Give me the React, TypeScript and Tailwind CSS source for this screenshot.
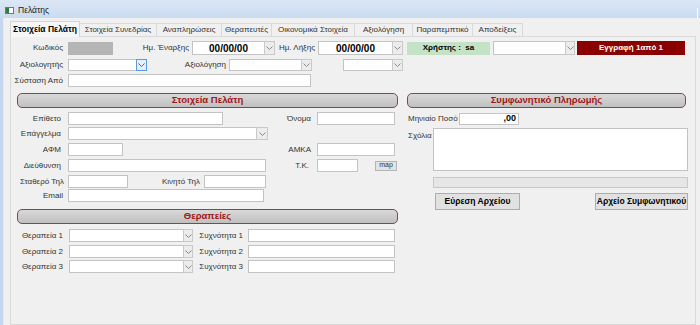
const Chevron = ({ color = '#8a8a8a' }: { color?: string }) => (
  <svg width="7" height="4" viewBox="0 0 7 4">
    <path d="M0.5 0.5 L3.5 3.5 L6.5 0.5" stroke={color} strokeWidth="1" fill="none" />
  </svg>
);

const Label = ({ text, w, pr = 5, left = false }: { text: string; w: number; pr?: number; left?: boolean }) => (
  <div
    className={`shrink-0 whitespace-nowrap text-[#333] ${left ? 'text-left' : 'text-right'}`}
    style={{ width: w, paddingRight: pr }}
  >
    {text}
  </div>
);

const Input = ({ w, h = 13, children, className = '' }: { w: number; h?: number; children?: React.ReactNode; className?: string }) => (
  <div
    className={`shrink-0 bg-white border border-[#c3c3c3] flex items-center ${className}`}
    style={{ width: w, height: h }}
  >
    {children}
  </div>
);

const Select = ({ w, bw = 11, h = 13, focused = false, children }: { w: number; bw?: number; h?: number; focused?: boolean; children?: React.ReactNode }) => (
  <div className="shrink-0 flex" style={{ height: h }}>
    <div className="bg-white border border-[#c3c3c3] border-r-0 flex items-center justify-center" style={{ width: w }}>
      {children}
    </div>
    <div
      className={`flex items-center justify-center border ${focused ? 'border-[#5a9be0] bg-[#e3effb]' : 'border-[#c9c9c9] bg-[#ececec]'}`}
      style={{ width: bw }}
    >
      <Chevron color={focused ? '#3f6f9f' : '#8a8a8a'} />
    </div>
  </div>
);

const Header = ({ title, w }: { title: string; w: number }) => (
  <div
    className="h-[15px] shrink-0 rounded-[5px] border border-[#a23a3a] bg-gradient-to-b from-[#d9d9d9] to-[#c0c0c0] flex items-center justify-center text-[9.5px] font-bold text-[#a01616]"
    style={{ width: w }}
  >
    {title}
  </div>
);

const tabs = [
  { name: 'Στοιχεία Συνεδρίας', w: 77 },
  { name: 'Αναπληρώσεις', w: 65 },
  { name: 'Θεραπευτές', w: 50 },
  { name: 'Οικονομικά Στοιχεία', w: 83 },
  { name: 'Αξιολόγηση', w: 58 },
  { name: 'Παραπεμπτικό', w: 60 },
  { name: 'Αποδείξεις', w: 50 },
];

export default function App() {
  return (
    <div className="w-[700px] h-[325px] overflow-hidden flex flex-col font-['Liberation_Sans',Arial,sans-serif] text-[8px] text-[#222] bg-[#f0f0f0]">
      {/* title bar */}
      <div className="h-[18px] shrink-0 bg-gradient-to-b from-[#dce7f5] to-[#c9dbf0] flex items-center pl-[5px] pt-[3px] relative">
        <div className="w-[9px] h-[7px] border border-[#6b7d6b] flex">
          <div className="w-[3px] bg-[#2e7d3e]" />
          <div className="flex-1 bg-white" />
        </div>
        <span className="ml-[4px] text-[8.5px] text-[#1b1b1b]">Πελάτης</span>
        <div className="absolute right-[2px] top-[8px] w-[1px] h-[10px] bg-white" />
      </div>

      <div className="flex flex-1">
        <div className="w-[3px] bg-[#c4d7ee]" />
        <div className="w-[1px] bg-[#e2ecf8]" />
        <div className="flex-1 flex flex-col pl-[6px] pt-[3px]">
          {/* tabs */}
          <div className="flex h-[15px] shrink-0">
            <div className="relative z-10 w-[70px] h-[16px] border border-b-0 border-[#d4d4d4] bg-[#f6f6f6] flex items-center justify-center font-bold text-[8.5px] text-black">
              Στοιχεία Πελάτη
            </div>
            {tabs.map((t) => (
              <div
                key={t.name}
                className="mt-[2px] h-[13px] border border-l-0 border-b-0 border-[#d9d9d9] bg-[#f0f0f0] flex items-center justify-center text-[#333]"
                style={{ width: t.w }}
              >
                {t.name}
              </div>
            ))}
          </div>

          {/* panel */}
          <div className="w-[686px] flex-1 border border-[#d9d9d9] bg-[#f0f0f0] pt-[4px] flex flex-col">
            {/* row 1 */}
            <div className="flex items-center h-[14px]">
              <Label text="Κωδικός" w={57} />
              <div className="w-[45px] h-[13px] bg-[#b5b5b5] shrink-0" />
              <Label text="Ημ. Έναρξης" w={79} pr={3} />
              <Select w={72} bw={11} h={14}>
                <span className="font-bold text-[10px] text-black">00/00/00</span>
              </Select>
              <Label text="Ημ. Λήξης" w={43} pr={3} />
              <Select w={74} bw={11} h={14}>
                <span className="font-bold text-[10px] text-black">00/00/00</span>
              </Select>
              <div className="ml-[4px] w-[83px] h-[13px] bg-[#c3e2c6] flex items-center justify-center font-bold text-[8px] text-black">
                Χρήστης :&nbsp; sa
              </div>
              <div className="ml-[3px]">
                <Select w={72} bw={10} h={14} />
              </div>
              <div className="ml-[2px] w-[108px] h-[14px] bg-[#8b0000] flex items-center justify-center font-bold text-[8px] text-white">
                Εγγραφή 1από 1
              </div>
            </div>

            {/* row 2 */}
            <div className="flex items-center h-[13px] mt-[3px]">
              <Label text="Αξιολογητής" w={57} />
              <Select w={68} bw={11} h={12} focused />
              <Label text="Αξιολόγηση" w={82} pr={3} />
              <Select w={72} bw={11} h={12} />
              <div className="ml-[31px]">
                <Select w={49} bw={11} h={12} />
              </div>
            </div>

            {/* row 3 */}
            <div className="flex items-center h-[13px] mt-[3px]">
              <Label text="Σύσταση Από" w={57} />
              <Input w={243} />
            </div>

            {/* columns */}
            <div className="flex mt-[6px] pl-[6px] gap-[9px]">
              {/* left column */}
              <div className="w-[381px] flex flex-col">
                <Header title="Στοιχεία Πελάτη" w={381} />

                <div className="flex items-center h-[13px] mt-[4px]">
                  <Label text="Επίθετο" w={51} pr={7} />
                  <Input w={155} />
                  <Label text="Όνομα" w={94} pr={6} />
                  <Input w={78} />
                </div>

                <div className="flex items-center h-[13px] mt-[2px]">
                  <Label text="Επάγγελμα" w={51} pr={7} />
                  <Select w={188} bw={12} h={13} />
                </div>

                <div className="flex items-center h-[13px] mt-[3px]">
                  <Label text="ΑΦΜ" w={51} pr={7} />
                  <Input w={55} />
                  <Label text="ΑΜΚΑ" w={194} pr={6} />
                  <Input w={78} />
                </div>

                <div className="flex items-center h-[13px] mt-[3px]">
                  <Label text="Διεύθυνση" w={51} pr={7} />
                  <Input w={198} />
                  <Label text="Τ.Κ." w={51} pr={8} />
                  <Input w={41} />
                  <div className="ml-[17px] w-[22px] h-[10px] border border-[#b4b4b4] bg-[#e3e3e3] flex items-center justify-center text-[7px] text-[#333]">
                    map
                  </div>
                </div>

                <div className="flex items-center h-[13px] mt-[3px]">
                  <Label text="Σταθερό Τηλ" w={51} pr={4} />
                  <Input w={60} />
                  <Label text="Κινητό Τηλ" w={76} pr={4} />
                  <Input w={62} />
                </div>

                <div className="flex items-center h-[13px] mt-[1px]">
                  <Label text="Email" w={51} pr={5} />
                  <Input w={196} />
                </div>

                <div className="mt-[7px]">
                  <Header title="Θεραπείες" w={381} />
                </div>

                {[1, 2, 3].map((n, i) => (
                  <div key={n} className={`flex items-center h-[13px] ${i === 0 ? 'mt-[5px]' : i === 1 ? 'mt-[3px]' : 'mt-[2px]'}`}>
                    <Label text={`Θεραπεία ${n}`} w={52} pr={6} />
                    <Select w={114} bw={10} h={13} />
                    <Label text={`Συχνότητα ${n}`} w={55} pr={5} />
                    <Input w={147} />
                  </div>
                ))}
              </div>

              {/* right column */}
              <div className="w-[281px] flex flex-col">
                <Header title="Συμφωνητικό Πληρωμής" w={279} />

                <div className="flex items-center h-[12px] mt-[5px]">
                  <div className="w-[52px] pl-[1px] text-[#333] whitespace-nowrap">Μηνιαίο Ποσό</div>
                  <Input w={60} h={12} className="justify-end pr-[2px]">
                    <span className="font-bold text-[9px] text-black">,00</span>
                  </Input>
                </div>

                <div className="flex mt-[3px]">
                  <div className="w-[26px] pl-[1px] pt-[2px] text-[#333]">Σχόλια</div>
                  <div className="w-[255px] h-[43px] bg-white border border-[#c3c3c3]" />
                </div>

                <div className="ml-[26px] mt-[6px] w-[255px] h-[11px] border border-[#c8c8c8] bg-[#e6e6e6]" />

                <div className="flex mt-[5px]">
                  <div className="ml-[28px] w-[85px] h-[17px] border border-[#adadad] bg-[#e1e1e1] flex items-center justify-center font-bold text-[8.5px] text-black">
                    Εύρεση Αρχείου
                  </div>
                  <div className="ml-[75px] w-[93px] h-[17px] border border-[#adadad] bg-[#e1e1e1] flex items-center justify-center font-bold text-[8.5px] text-black whitespace-nowrap">
                    Αρχείο Συμφωνητικού
                  </div>
                </div>
              </div>
            </div>
          </div>
        </div>
      </div>
    </div>
  );
}
